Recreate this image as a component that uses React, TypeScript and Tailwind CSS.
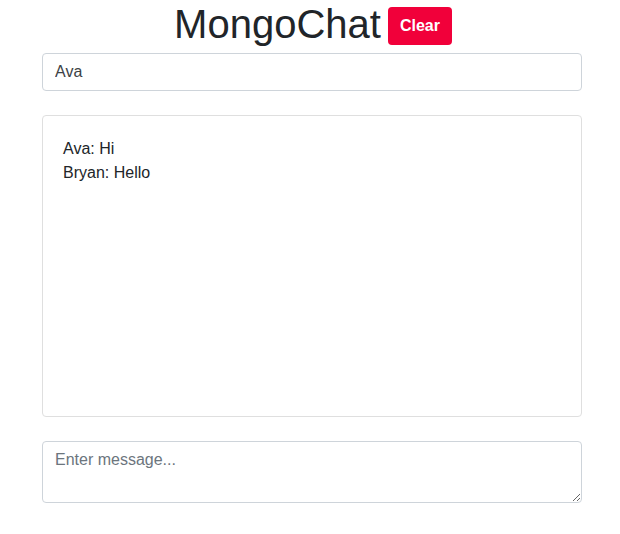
import React from "react";

export default function App() {
  return (
    <div className="w-[620px] h-[534px] bg-white text-[#212529]" style={{ fontFamily: '"Liberation Sans", Arial, sans-serif' }}>
      <div className="ml-[42px] w-[540px] flex flex-col">
        <div className="h-[53px] flex justify-center items-start gap-[7px]">
          <h1 className="text-[40px] leading-[48px] font-normal m-0 pl-[2px]">MongoChat</h1>
          <button className="mt-[7px] h-[38px] w-[64px] rounded-[4px] bg-[#f1003a] text-white text-[16px] font-bold leading-[24px]">
            Clear
          </button>
        </div>
        <input
          defaultValue="Ava"
          className="h-[38px] w-full border border-[#ced4da] rounded-[4px] px-[12px] text-[16px] text-[#3d4246] outline-none"
        />
        <div className="mt-[24px] h-[302px] border border-[#dfdfdf] rounded-[4px] px-[20px] pt-[21px] text-[16px] leading-[24px]">
          <div>Ava: Hi</div>
          <div>Bryan: Hello</div>
        </div>
        <textarea
          placeholder="Enter message..."
          className="mt-[24px] h-[62px] w-full border border-[#ced4da] rounded-[4px] px-[12px] py-[6px] text-[16px] leading-[24px] outline-none placeholder:text-[#6c757d]"
        />
      </div>
    </div>
  );
}
